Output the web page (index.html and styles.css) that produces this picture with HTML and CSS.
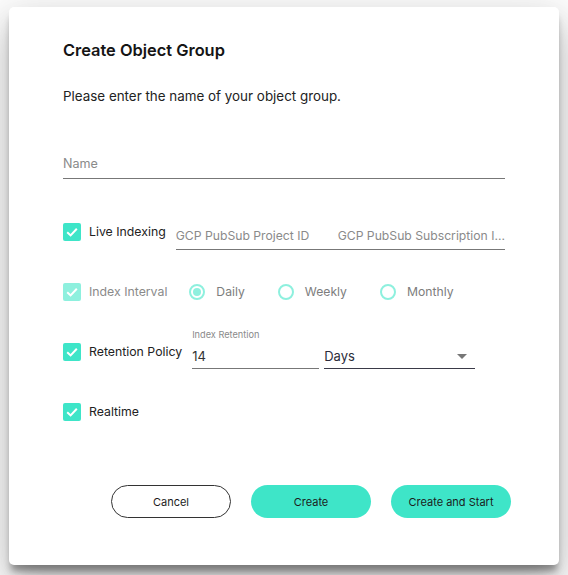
FILE: index.html
```html
<!DOCTYPE html>
<html>
<head>
<meta charset="utf-8">
<title>Create Object Group</title>
<link rel="stylesheet" href="styles.css">
</head>
<body>
<div class="dialog">
  <h1 class="title">Create Object Group</h1>
  <p class="subtitle">Please enter the name of your object group.</p>

  <div class="name-field"><span class="placeholder name">Name</span></div>

  <div class="row row-live">
    <div class="check">
      <span class="box"><svg viewBox="0 0 18 18" width="18" height="18"><path d="M4.2 9.2 L7.6 12.4 L13.8 5.8" fill="none" stroke="#fff" stroke-width="2"/></svg></span>
      <span class="check-label">Live Indexing</span>
    </div>
    <div class="split-field">
      <span class="placeholder half">GCP PubSub Project ID</span>
      <span class="placeholder half">GCP PubSub Subscription I...</span>
    </div>
  </div>

  <div class="row row-interval">
    <div class="check disabled">
      <span class="box"><svg viewBox="0 0 18 18" width="18" height="18"><path d="M4.2 9.2 L7.6 12.4 L13.8 5.8" fill="none" stroke="#fff" stroke-width="2"/></svg></span>
      <span class="check-label">Index Interval</span>
    </div>
    <div class="radio-group">
      <div class="radio checked"><span class="circle"></span><span class="radio-label">Daily</span></div>
      <div class="radio"><span class="circle"></span><span class="radio-label">Weekly</span></div>
      <div class="radio"><span class="circle"></span><span class="radio-label">Monthly</span></div>
    </div>
  </div>

  <div class="row row-retention">
    <div class="check">
      <span class="box"><svg viewBox="0 0 18 18" width="18" height="18"><path d="M4.2 9.2 L7.6 12.4 L13.8 5.8" fill="none" stroke="#fff" stroke-width="2"/></svg></span>
      <span class="check-label">Retention Policy</span>
    </div>
    <div class="retention-field">
      <span class="small-label">Index Retention</span>
      <span class="value">14</span>
    </div>
    <div class="select-field">
      <span class="value dark">Days</span>
      <span class="arrow"></span>
    </div>
  </div>

  <div class="row row-realtime">
    <div class="check">
      <span class="box"><svg viewBox="0 0 18 18" width="18" height="18"><path d="M4.2 9.2 L7.6 12.4 L13.8 5.8" fill="none" stroke="#fff" stroke-width="2"/></svg></span>
      <span class="check-label">Realtime</span>
    </div>
  </div>

  <div class="actions">
    <button class="btn outline">Cancel</button>
    <button class="btn filled">Create</button>
    <button class="btn filled">Create and Start</button>
  </div>
</div>
</body>
</html>
```

FILE: styles.css
```css
html, body {
  margin: 0;
  background: #ffffff;
}
body {
  font-family: Inter, "Noto Sans", sans-serif;
  color: #222;
  height: 575px;
}
.dialog {
  margin: 7px 0 0 9px;
  width: 550px;
  height: 558px;
  box-sizing: border-box;
  padding: 31px 54px 0;
  background: #fff;
  border-radius: 5px;
  box-shadow: 0 8px 6px -2px rgba(0,0,0,0.3), 0 11px 15px -7px rgba(0,0,0,0.2), 0 24px 38px 3px rgba(0,0,0,0.14), 0 9px 46px 8px rgba(0,0,0,0.12);
  display: flex;
  flex-direction: column;
}
.title {
  margin: 0;
  font-size: 16.4px;
  font-weight: 600;
  line-height: 24px;
  color: #151515;
}
.subtitle {
  margin: 24px 0 0;
  font-size: 13.4px;
  line-height: 20px;
  color: #222;
}
.placeholder {
  font-size: 12.2px;
  line-height: 20px;
  color: #8a8a8a;
}
.placeholder.name {
  font-size: 12.6px;
}
.name-field {
  margin-top: 48px;
  padding-bottom: 4px;
  border-bottom: 1px solid #777;
  display: flex;
}
.row {
  display: flex;
  align-items: flex-start;
}
.check {
  display: flex;
  align-items: center;
  gap: 8px;
  height: 20px;
}
.box {
  width: 18px;
  height: 18px;
  border-radius: 2px;
  background: #3ee5c8;
  display: flex;
}
.check-label {
  font-size: 12.3px;
  line-height: 20px;
  color: #222;
}
.check.disabled .box {
  background: #8ef0de;
}
.check.disabled .check-label {
  color: #8a8a8a;
}
.row-live {
  margin-top: 43px;
}
.split-field {
  flex: 1;
  margin-left: 10px;
  margin-top: 4px;
  padding-bottom: 3px;
  border-bottom: 1px solid #777;
  display: flex;
}
.half {
  flex: 1;
  white-space: nowrap;
}
.row-interval {
  margin-top: 32px;
}
.radio-group {
  display: flex;
  gap: 33px;
  margin-left: 22px;
  height: 20px;
}
.radio {
  display: flex;
  align-items: center;
  gap: 11px;
}
.circle {
  width: 16px;
  height: 16px;
  box-sizing: border-box;
  border: 2px solid #8ef0de;
  border-radius: 50%;
  display: flex;
  align-items: center;
  justify-content: center;
}
.radio.checked .circle::after {
  content: "";
  width: 8px;
  height: 8px;
  border-radius: 50%;
  background: #8ef0de;
}
.radio-label {
  font-size: 12.2px;
  line-height: 20px;
  color: #7d7d7d;
}
.row-retention {
  margin-top: 27px;
}
.row-retention .check {
  margin-top: 13px;
}
.retention-field {
  margin-left: 10px;
  width: 127px;
  display: flex;
  flex-direction: column;
  border-bottom: 1px solid #777;
  padding-bottom: 2px;
}
.small-label {
  font-size: 9.2px;
  line-height: 12px;
  color: #8a8a8a;
  margin-bottom: 5px;
}
.value {
  font-size: 13px;
  line-height: 20px;
  color: #333;
}
.value.dark {
  color: #2c2c3a;
}
.select-field {
  margin-left: 5px;
  margin-top: 17px;
  width: 151px;
  display: flex;
  align-items: center;
  justify-content: space-between;
  border-bottom: 1px solid #3a3a48;
  padding-bottom: 2px;
}
.arrow {
  width: 0;
  height: 0;
  border-left: 5px solid transparent;
  border-right: 5px solid transparent;
  border-top: 5px solid #777;
  margin-right: 8px;
}
.row-realtime {
  margin-top: 33px;
}
.actions {
  margin-top: 63px;
  margin-right: -6px;
  display: flex;
  justify-content: flex-end;
  gap: 20px;
}
.btn {
  width: 120px;
  height: 33px;
  border-radius: 17px;
  font-family: inherit;
  font-size: 11px;
  font-weight: 400;
  color: #1c1c1c;
  cursor: pointer;
}
.btn.outline {
  background: #fff;
  border: 1px solid #333;
}
.btn.filled {
  background: #3ee5c8;
  border: none;
}
```
